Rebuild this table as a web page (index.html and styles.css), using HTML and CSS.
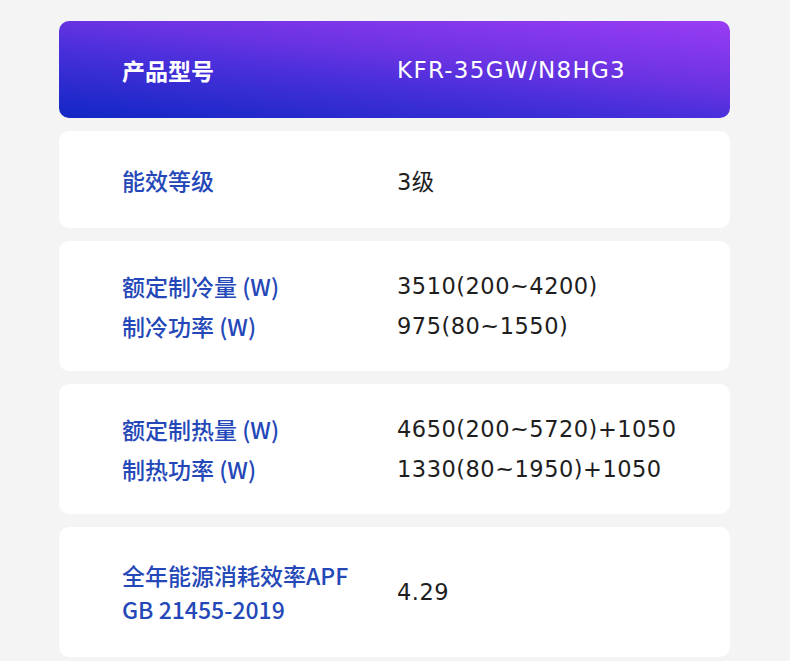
FILE: index.html
```html
<!DOCTYPE html>
<html lang="zh-CN">
<head>
<meta charset="utf-8">
<title>产品参数</title>
<link rel="stylesheet" href="styles.css">
</head>
<body>
<div class="specs">
  <div class="row row-head">
    <div class="label">产品型号</div>
    <div class="value">KFR-35GW/N8HG3</div>
  </div>
  <div class="row row-single">
    <div class="label">能效等级</div>
    <div class="value">3级</div>
  </div>
  <div class="row row-double">
    <div class="label"><div>额定制冷量 (W)</div><div>制冷功率 (W)</div></div>
    <div class="value"><div>3510(200~4200)</div><div>975(80~1550)</div></div>
  </div>
  <div class="row row-double">
    <div class="label"><div>额定制热量 (W)</div><div>制热功率 (W)</div></div>
    <div class="value"><div>4650(200~5720)+1050</div><div>1330(80~1950)+1050</div></div>
  </div>
  <div class="row row-apf">
    <div class="label"><div>全年能源消耗效率APF</div><div>GB 21455-2019</div></div>
    <div class="value">4.29</div>
  </div>
</div>
</body>
</html>
```

FILE: styles.css
```css
html, body {
  margin: 0;
  padding: 0;
  background: #f4f4f4;
}

.specs {
  width: 671px;
  margin: 0 0 0 59px;
  padding: 21px 0 6px;
  display: flex;
  flex-direction: column;
  gap: 13px;
}

.row {
  display: grid;
  grid-template-columns: 275px 1fr;
  align-items: center;
  padding-left: 63px;
  background: #ffffff;
  border-radius: 10px;
}

.row-head {
  height: 97px;
  background: linear-gradient(6deg, #1127c3 0%, #4a2fdb 42%, #6a33e2 60%, #9a3cf4 100%);
}

.row-single { height: 97px; }
.row-double { height: 130px; line-height: 40px; }
.row-apf { height: 130px; line-height: 34px; }

.label {
  font-family: "Noto Sans CJK SC", "Noto Sans", sans-serif;
  font-size: 23px;
  font-weight: 500;
  color: #2448b8;
}

.value {
  font-family: "DejaVu Sans", "Noto Sans CJK SC", sans-serif;
  font-size: 22.5px;
  letter-spacing: 0.5px;
  color: #1e1e1e;
}

.row-head .label {
  color: #ffffff;
  font-weight: 700;
}

.row-head .value {
  color: #ffffff;
  font-size: 23px;
  letter-spacing: 1.3px;
}
```
